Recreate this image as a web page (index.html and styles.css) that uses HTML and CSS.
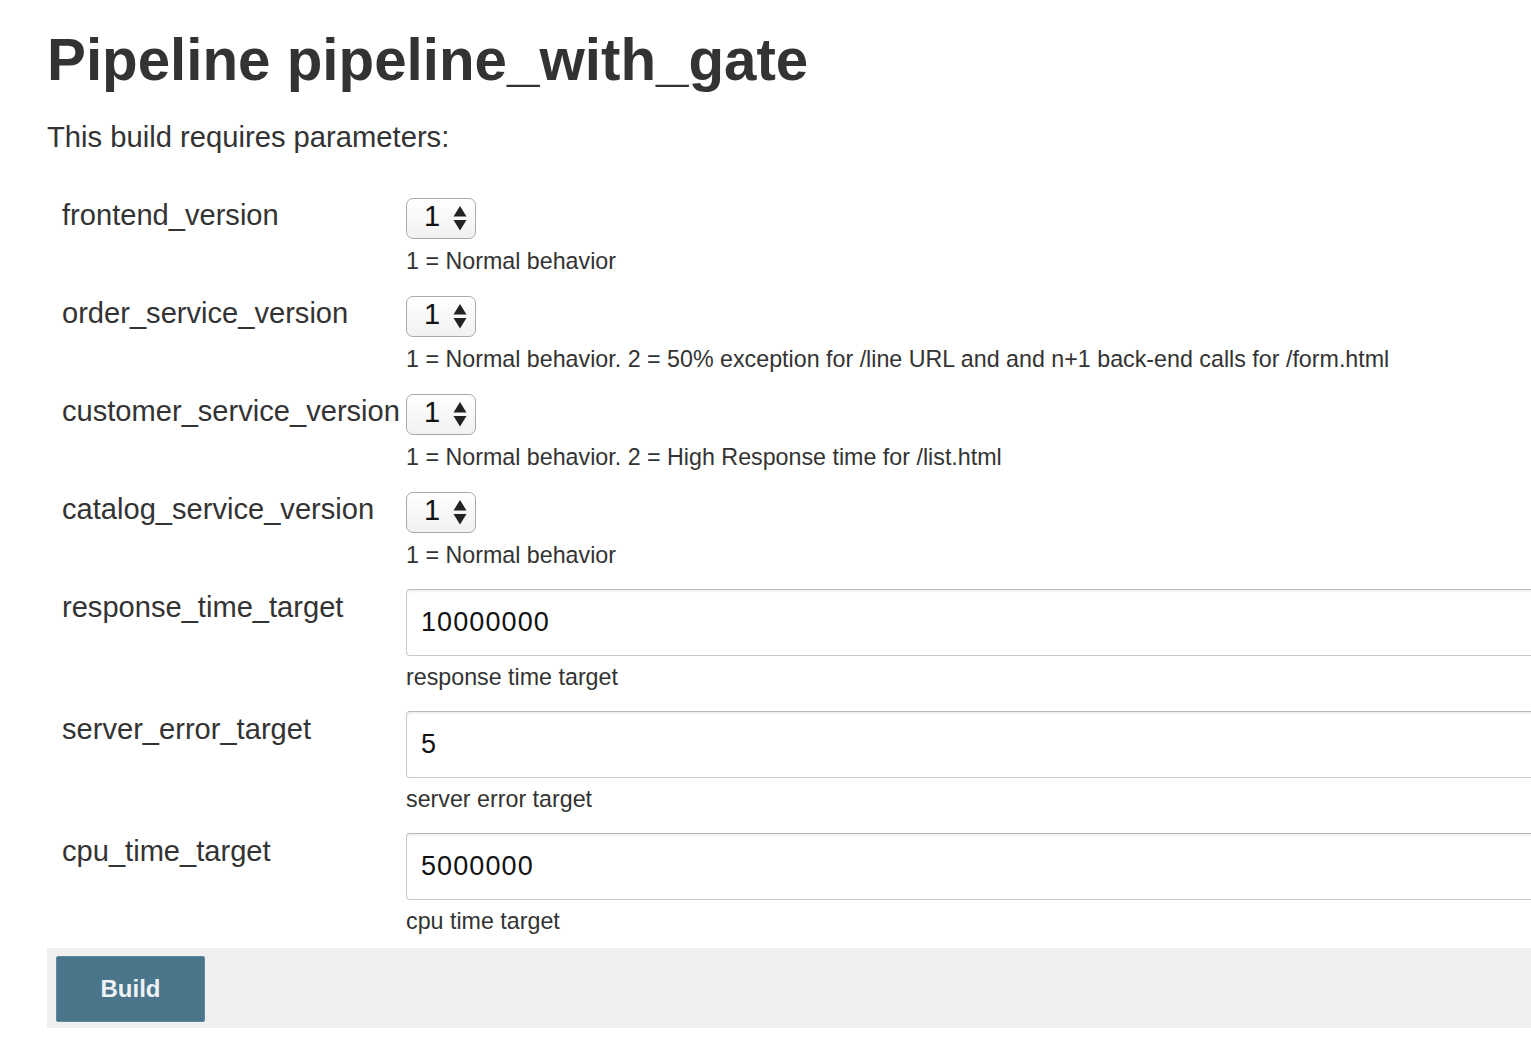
FILE: index.html
```html
<!DOCTYPE html>
<html lang="en">
<head>
<meta charset="utf-8">
<title>Pipeline pipeline_with_gate</title>
<link rel="stylesheet" href="styles.css">
</head>
<body>
<main class="page">
  <h1 class="title">Pipeline pipeline_with_gate</h1>
  <p class="intro">This build requires parameters:</p>
  <form class="params">
    <div class="label">frontend_version</div>
    <div class="field">
      <div class="sel"><span class="sel-value">1</span><svg class="sel-arrows" width="14" height="25" viewBox="0 0 14 25"><polygon points="7,0 13.5,10.5 0.5,10.5" fill="#222"/><polygon points="0.5,14 13.5,14 7,24.5" fill="#222"/></svg></div>
      <div class="desc desc-sel">1 = Normal behavior</div>
    </div>

    <div class="label">order_service_version</div>
    <div class="field">
      <div class="sel"><span class="sel-value">1</span><svg class="sel-arrows" width="14" height="25" viewBox="0 0 14 25"><polygon points="7,0 13.5,10.5 0.5,10.5" fill="#222"/><polygon points="0.5,14 13.5,14 7,24.5" fill="#222"/></svg></div>
      <div class="desc desc-sel">1 = Normal behavior. 2 = 50% exception for /line URL and and n+1 back-end calls for /form.html</div>
    </div>

    <div class="label">customer_service_version</div>
    <div class="field">
      <div class="sel"><span class="sel-value">1</span><svg class="sel-arrows" width="14" height="25" viewBox="0 0 14 25"><polygon points="7,0 13.5,10.5 0.5,10.5" fill="#222"/><polygon points="0.5,14 13.5,14 7,24.5" fill="#222"/></svg></div>
      <div class="desc desc-sel">1 = Normal behavior. 2 = High Response time for /list.html</div>
    </div>

    <div class="label">catalog_service_version</div>
    <div class="field">
      <div class="sel"><span class="sel-value">1</span><svg class="sel-arrows" width="14" height="25" viewBox="0 0 14 25"><polygon points="7,0 13.5,10.5 0.5,10.5" fill="#222"/><polygon points="0.5,14 13.5,14 7,24.5" fill="#222"/></svg></div>
      <div class="desc desc-sel">1 = Normal behavior</div>
    </div>

    <div class="label">response_time_target</div>
    <div class="field">
      <input class="text" type="text" value="10000000">
      <div class="desc desc-text">response time target</div>
    </div>

    <div class="label">server_error_target</div>
    <div class="field">
      <input class="text" type="text" value="5">
      <div class="desc desc-text">server error target</div>
    </div>

    <div class="label">cpu_time_target</div>
    <div class="field">
      <input class="text" type="text" value="5000000">
      <div class="desc desc-text">cpu time target</div>
    </div>
  </form>
  <div class="bottom-bar">
    <button class="build" type="button">Build</button>
  </div>
</main>
</body>
</html>
```

FILE: styles.css
```css
html, body {
  margin: 0;
  padding: 0;
  overflow: hidden;
  background: #ffffff;
}

body {
  font-family: "Liberation Sans", Arial, Helvetica, sans-serif;
  color: #333333;
}

.page {
  margin-left: 47px;
}

.title {
  margin: 26px 0 0 0;
  font-size: 58.3px;
  line-height: 67px;
  font-weight: 700;
  color: #333333;
}

.intro {
  margin: 27px 0 0 0;
  font-size: 29.2px;
  line-height: 35px;
}

.params {
  display: grid;
  grid-template-columns: 344px 1fr;
  row-gap: 21px;
  margin-top: 43px;
  padding-left: 15px;
}

.label {
  font-size: 29.1px;
  line-height: 35px;
  white-space: nowrap;
  color: #333333;
}

.field {
  min-width: 0;
}

.sel {
  display: flex;
  align-items: flex-start;
  box-sizing: border-box;
  width: 70px;
  height: 41px;
  padding-left: 17px;
  border: 1px solid #a9a9a9;
  border-radius: 7px;
  background: linear-gradient(#ffffff, #f1f1f1);
}

.sel-value {
  margin-top: 3px;
  font-size: 29px;
  line-height: 29px;
  color: #111111;
}

.sel-arrows {
  display: block;
  margin-top: 7px;
  margin-left: 13px;
}

.desc {
  font-size: 23.25px;
  line-height: 28px;
  color: #333333;
  white-space: nowrap;
}

.desc-sel {
  margin-top: 8px;
}

.desc-text {
  margin-top: 7px;
}

.text {
  display: block;
  box-sizing: border-box;
  width: 1200px;
  height: 67px;
  margin: -1px 0 0 0;
  padding: 0 0 0 14px;
  border: 1px solid #c8c8c8;
  border-top-color: #b9b9b9;
  border-radius: 4px;
  box-shadow: inset 0 2px 2px rgba(0, 0, 0, 0.06);
  font-family: "Liberation Sans", Arial, sans-serif;
  font-size: 27px;
  letter-spacing: 1.1px;
  color: #111111;
  background: #ffffff;
  outline: none;
}

.bottom-bar {
  margin-top: 13px;
  height: 80px;
  box-sizing: border-box;
  padding: 8px 0 0 9px;
  background: #f0f0f0;
}

.build {
  display: block;
  box-sizing: border-box;
  width: 149px;
  height: 66px;
  margin: 0;
  padding: 0;
  border: 1px solid #5d8aa3;
  border-radius: 2px;
  background: #4b758b;
  color: #eef2f4;
  font-family: "Liberation Sans", Arial, sans-serif;
  font-size: 24px;
  font-weight: 700;
  cursor: pointer;
}
```
